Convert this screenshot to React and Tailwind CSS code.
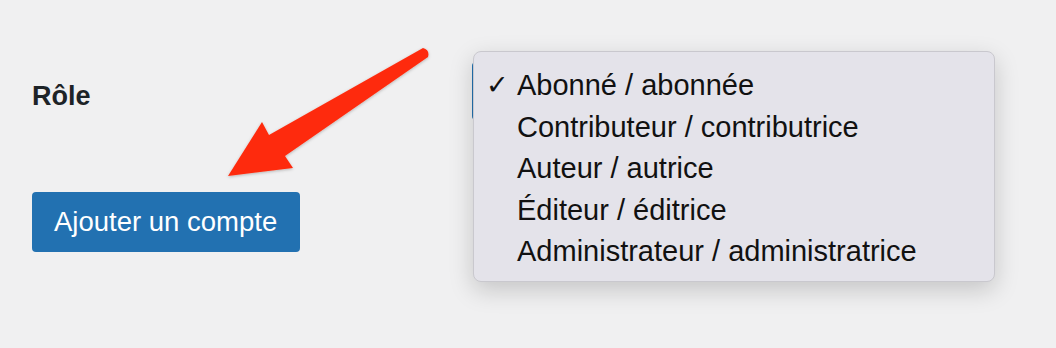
import React from 'react'

const roles = [
  'Abonné / abonnée',
  'Contributeur / contributrice',
  'Auteur / autrice',
  'Éditeur / éditrice',
  'Administrateur / administratrice',
]

const App = () => {
  return (
    <div className="relative w-[1056px] h-[348px] overflow-hidden bg-[#f0f0f1] font-['Liberation_Sans',Arial,sans-serif] text-[#1d2327]">
      <div className="flex pl-8 pt-[79px]">
        {/* Left column */}
        <div className="w-[440px] flex flex-col">
          <div className="text-[27px] font-bold leading-[34px]">Rôle</div>
          <button className="mt-[79px] w-[268px] h-[60px] rounded-[4px] bg-[#2271b1] text-white text-[27.5px] text-left pl-[22px]">
            Ajouter un compte
          </button>
        </div>

        {/* Select with open menu */}
        <div className="relative">
          <div className="w-[300px] h-[58px] mt-[-17px] rounded-[4px] border-2 border-[#2271b1] bg-white" />
          <div className="absolute left-[1px] top-[-28px] w-[522px] h-[231px] rounded-[8px] border border-[#c9c8ce] bg-[#e4e3ea] shadow-[0_8px_24px_rgba(0,0,0,0.18)] pt-[13px]">
            {roles.map((role, i) => (
              <div key={role} className="flex items-center h-[41.5px] text-[29px] text-[#111]">
                <span className="w-[43px] pl-[12px] text-[27px] leading-none">{i === 0 ? '✓' : ''}</span>
                <span>{role}</span>
              </div>
            ))}
          </div>
        </div>
      </div>

      {/* Red arrow annotation */}
      <svg className="absolute left-0 top-0" width="1056" height="348" viewBox="0 0 1056 348">
        <defs>
          <filter id="sh" x="-20%" y="-20%" width="140%" height="140%">
            <feDropShadow dx="0" dy="1" stdDeviation="1.5" floodColor="#000" floodOpacity="0.25" />
          </filter>
        </defs>
        <path
          d="M423 48 Q430 50 428 57 L285 156 L293 168 L228 176 L262 122 L269 135 Z"
          fill="#fe2c0e"
          filter="url(#sh)"
          strokeLinejoin="round"
        />
      </svg>
    </div>
  )
}

export default App
